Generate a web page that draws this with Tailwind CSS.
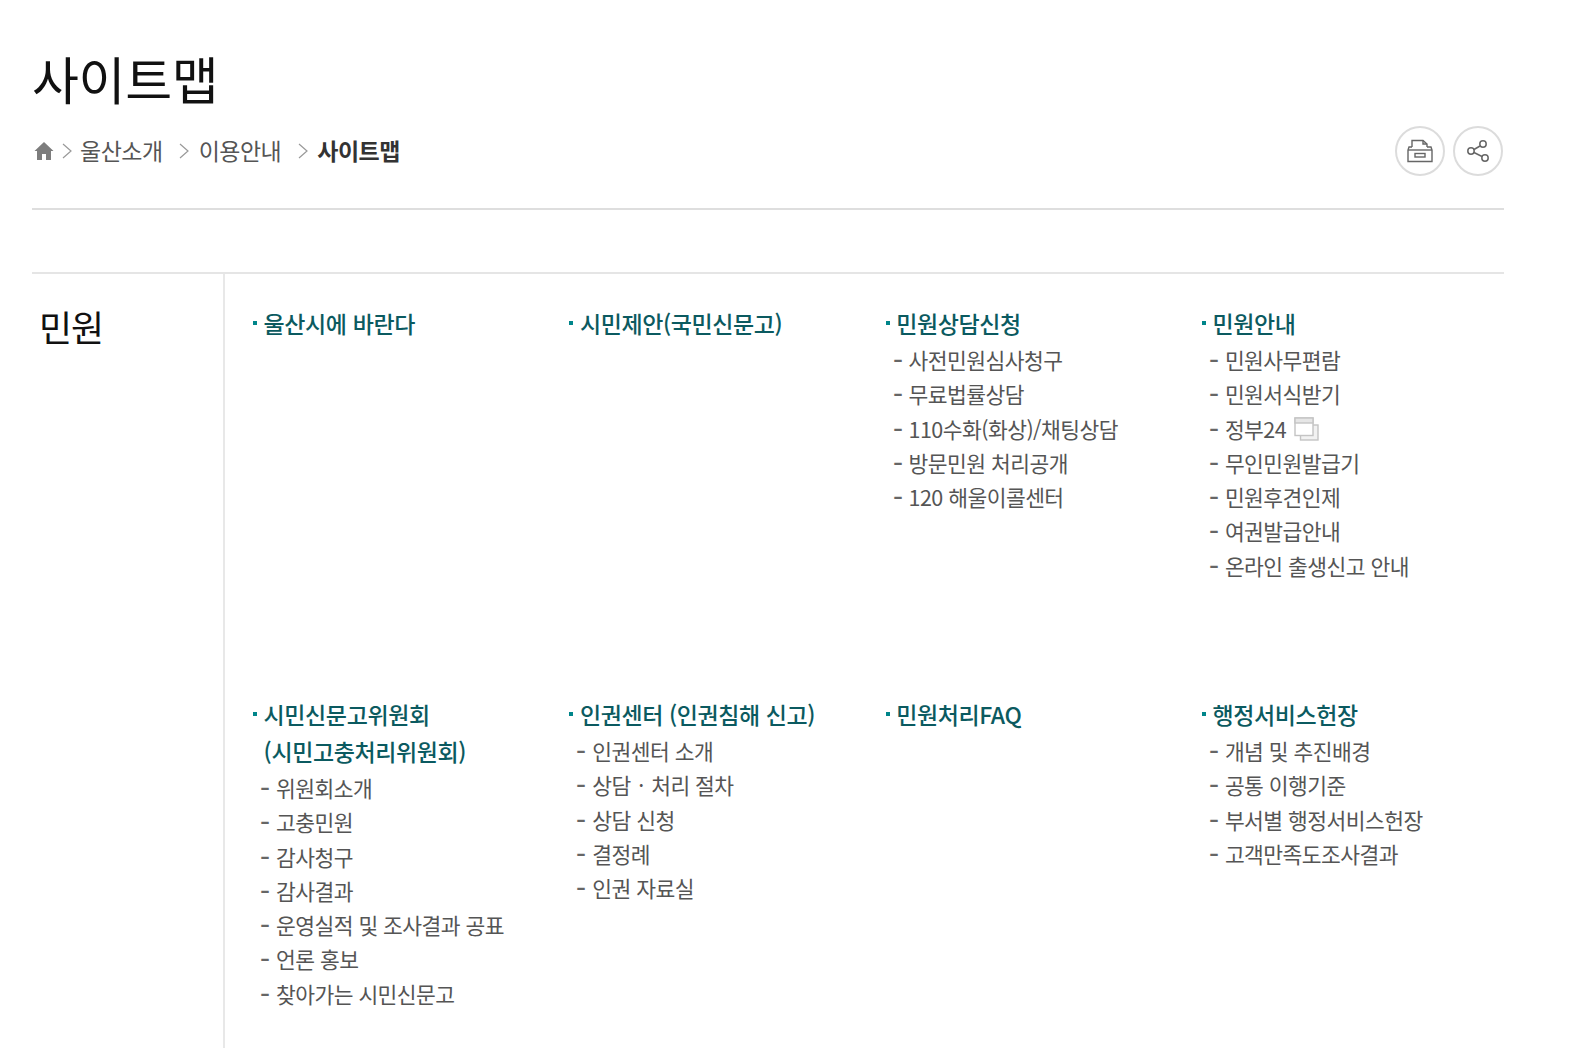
<!DOCTYPE html>
<html lang="ko">
<head>
    <meta charset="UTF-8">
    <title>사이트맵</title>
    <script src="https://cdn.jsdelivr.net/npm/@tailwindcss/browser@4"></script>
</head>
<body class="bg-white font-['Noto_Sans_CJK_KR',sans-serif] overflow-hidden">
    <div class="w-[1569px] h-[1048px] pl-[32px] pr-[65px] overflow-hidden">
        <!-- 제목 -->
        <h1 class="pt-[44px] h-[120px] text-[51px] leading-[68px] font-normal tracking-[-0.3px] text-[#111]">사이트맵</h1>

        <!-- 경로 -->
        <div class="flex items-center justify-between h-[90px] pb-[27px] border-b-2 border-[#dedede]">
            <div class="flex items-center pl-[2px] text-[23px] tracking-[-0.5px] text-[#555]">
                <svg class="w-[20px] h-[20px]" viewBox="0 0 20 20" fill="#7d7d7d"><path d="M10 1 L19.5 10 L17 10 L17 19 L12 19 L12 13 L8 13 L8 19 L3 19 L3 10 L0.5 10 Z"/></svg>
                <svg class="w-[10px] h-[16px] ml-[8px] mr-[8px]" viewBox="0 0 10 16" fill="none" stroke="#999" stroke-width="1.2"><path d="M1 1 L9 8 L1 15"/></svg>
                <span>울산소개</span>
                <svg class="w-[10px] h-[16px] ml-[16px] mr-[10px]" viewBox="0 0 10 16" fill="none" stroke="#999" stroke-width="1.2"><path d="M1 1 L9 8 L1 15"/></svg>
                <span>이용안내</span>
                <svg class="w-[10px] h-[16px] ml-[17px] mr-[9px]" viewBox="0 0 10 16" fill="none" stroke="#999" stroke-width="1.2"><path d="M1 1 L9 8 L1 15"/></svg>
                <span class="font-semibold text-[#333]">사이트맵</span>
            </div>
            <div class="flex gap-[8px] mr-[1px]">
                <button class="w-[50px] h-[50px] rounded-full border-2 border-[#dcdcdc] flex items-center justify-center">
                    <svg class="w-[26px] h-[24px]" viewBox="0 0 26 24" fill="none" stroke="#666" stroke-width="1.4"><path d="M5 8 V1.5 H16 L20 5 V8"/><path d="M16 1.5 V5 H20"/><path d="M5 8 H2 L1 11 V22.5 H25 V11 L24 8 H20"/><path d="M1 11 H25"/><rect x="8" y="14.5" width="10" height="3.5"/></svg>
                </button>
                <button class="w-[50px] h-[50px] rounded-full border-2 border-[#dcdcdc] flex items-center justify-center">
                    <svg class="w-[24px] h-[24px]" viewBox="0 0 24 24" fill="none" stroke="#666" stroke-width="1.5"><circle cx="17" cy="5" r="3.2"/><circle cx="5" cy="12" r="3.2"/><circle cx="19" cy="19" r="3.2"/><path d="M8 10.5 L14 7"/><path d="M8 13.5 L16 17.5"/></svg>
                </button>
            </div>
        </div>

        <!-- 민원 -->
        <div class="flex mt-[62px] border-t-2 border-[#e5e5e5]">
            <h2 class="w-[193px] shrink-0 pl-[7px] pt-[27px] text-[36px] leading-[50px] font-normal tracking-[-1.2px] text-[#111] border-r-2 border-[#e8e8e8] h-[780px]">민원</h2>
            <div class="grid grid-cols-[316.3px_316.3px_316.3px_316.3px] grid-rows-[391px_auto] pl-[27px] pt-[31px]">
                <div>
                    <a class="flex text-[23px] leading-[37px] font-medium tracking-[-0.4px] text-[#0b5a60]"><span class="w-[4px] h-[4px] mt-[16px] ml-[1px] mr-[6.6px] shrink-0 bg-[#00858a]"></span>울산시에 바란다</a>
                </div>
                <div>
                    <a class="flex text-[23px] leading-[37px] font-medium tracking-[-0.4px] text-[#0b5a60]"><span class="w-[4px] h-[4px] mt-[16px] ml-[1px] mr-[6.6px] shrink-0 bg-[#00858a]"></span>시민제안(국민신문고)</a>
                </div>
                <div>
                    <a class="flex text-[23px] leading-[37px] font-medium tracking-[-0.4px] text-[#0b5a60]"><span class="w-[4px] h-[4px] mt-[16px] ml-[1px] mr-[6.6px] shrink-0 bg-[#00858a]"></span>민원상담신청</a>
                    <ul class="pl-[8px] pt-[1px] text-[21.5px] leading-[34.3px] tracking-[-0.55px] text-[#555]">
                        <li class="flex"><span class="w-[16px] shrink-0 font-bold scale-x-125 origin-left text-[#666]">-</span>사전민원심사청구</li>
                        <li class="flex"><span class="w-[16px] shrink-0 font-bold scale-x-125 origin-left text-[#666]">-</span>무료법률상담</li>
                        <li class="flex"><span class="w-[16px] shrink-0 font-bold scale-x-125 origin-left text-[#666]">-</span>110수화(화상)/채팅상담</li>
                        <li class="flex"><span class="w-[16px] shrink-0 font-bold scale-x-125 origin-left text-[#666]">-</span>방문민원 처리공개</li>
                        <li class="flex"><span class="w-[16px] shrink-0 font-bold scale-x-125 origin-left text-[#666]">-</span>120 해울이콜센터</li>
                    </ul>
                </div>
                <div>
                    <a class="flex text-[23px] leading-[37px] font-medium tracking-[-0.4px] text-[#0b5a60]"><span class="w-[4px] h-[4px] mt-[16px] ml-[1px] mr-[6.6px] shrink-0 bg-[#00858a]"></span>민원안내</a>
                    <ul class="pl-[8px] pt-[1px] text-[21.5px] leading-[34.3px] tracking-[-0.55px] text-[#555]">
                        <li class="flex"><span class="w-[16px] shrink-0 font-bold scale-x-125 origin-left text-[#666]">-</span>민원사무편람</li>
                        <li class="flex"><span class="w-[16px] shrink-0 font-bold scale-x-125 origin-left text-[#666]">-</span>민원서식받기</li>
                        <li class="flex items-center"><span class="w-[16px] shrink-0 font-bold scale-x-125 origin-left text-[#666]">-</span>정부24
                            <svg class="w-[25px] h-[24px] ml-[8px]" viewBox="0 0 25 24" stroke="#c4c4c4" stroke-width="1.4"><rect x="6.5" y="8" width="17.5" height="15" fill="#f2f2f2"/><rect x="1" y="1" width="18" height="17.5" fill="#fff"/><rect x="1" y="1" width="18" height="5" fill="#e6e6e6"/></svg>
                        </li>
                        <li class="flex"><span class="w-[16px] shrink-0 font-bold scale-x-125 origin-left text-[#666]">-</span>무인민원발급기</li>
                        <li class="flex"><span class="w-[16px] shrink-0 font-bold scale-x-125 origin-left text-[#666]">-</span>민원후견인제</li>
                        <li class="flex"><span class="w-[16px] shrink-0 font-bold scale-x-125 origin-left text-[#666]">-</span>여권발급안내</li>
                        <li class="flex"><span class="w-[16px] shrink-0 font-bold scale-x-125 origin-left text-[#666]">-</span>온라인 출생신고 안내</li>
                    </ul>
                </div>
                <div>
                    <a class="flex text-[23px] leading-[37px] font-medium tracking-[-0.4px] text-[#0b5a60]"><span class="w-[4px] h-[4px] mt-[16px] ml-[1px] mr-[6.6px] shrink-0 bg-[#00858a]"></span><span>시민신문고위원회<br>(시민고충처리위원회)</span></a>
                    <ul class="pl-[8px] pt-[1px] text-[21.5px] leading-[34.3px] tracking-[-0.55px] text-[#555]">
                        <li class="flex"><span class="w-[16px] shrink-0 font-bold scale-x-125 origin-left text-[#666]">-</span>위원회소개</li>
                        <li class="flex"><span class="w-[16px] shrink-0 font-bold scale-x-125 origin-left text-[#666]">-</span>고충민원</li>
                        <li class="flex"><span class="w-[16px] shrink-0 font-bold scale-x-125 origin-left text-[#666]">-</span>감사청구</li>
                        <li class="flex"><span class="w-[16px] shrink-0 font-bold scale-x-125 origin-left text-[#666]">-</span>감사결과</li>
                        <li class="flex"><span class="w-[16px] shrink-0 font-bold scale-x-125 origin-left text-[#666]">-</span>운영실적 및 조사결과 공표</li>
                        <li class="flex"><span class="w-[16px] shrink-0 font-bold scale-x-125 origin-left text-[#666]">-</span>언론 홍보</li>
                        <li class="flex"><span class="w-[16px] shrink-0 font-bold scale-x-125 origin-left text-[#666]">-</span>찾아가는 시민신문고</li>
                    </ul>
                </div>
                <div>
                    <a class="flex text-[23px] leading-[37px] font-medium tracking-[-0.4px] text-[#0b5a60]"><span class="w-[4px] h-[4px] mt-[16px] ml-[1px] mr-[6.6px] shrink-0 bg-[#00858a]"></span>인권센터 (인권침해 신고)</a>
                    <ul class="pl-[8px] pt-[1px] text-[21.5px] leading-[34.3px] tracking-[-0.55px] text-[#555]">
                        <li class="flex"><span class="w-[16px] shrink-0 font-bold scale-x-125 origin-left text-[#666]">-</span>인권센터 소개</li>
                        <li class="flex"><span class="w-[16px] shrink-0 font-bold scale-x-125 origin-left text-[#666]">-</span><span>상담 <span class="mx-[2px]">·</span> 처리 절차</span></li>
                        <li class="flex"><span class="w-[16px] shrink-0 font-bold scale-x-125 origin-left text-[#666]">-</span>상담 신청</li>
                        <li class="flex"><span class="w-[16px] shrink-0 font-bold scale-x-125 origin-left text-[#666]">-</span>결정례</li>
                        <li class="flex"><span class="w-[16px] shrink-0 font-bold scale-x-125 origin-left text-[#666]">-</span>인권 자료실</li>
                    </ul>
                </div>
                <div>
                    <a class="flex text-[23px] leading-[37px] font-medium tracking-[-0.4px] text-[#0b5a60]"><span class="w-[4px] h-[4px] mt-[16px] ml-[1px] mr-[6.6px] shrink-0 bg-[#00858a]"></span>민원처리FAQ</a>
                </div>
                <div>
                    <a class="flex text-[23px] leading-[37px] font-medium tracking-[-0.4px] text-[#0b5a60]"><span class="w-[4px] h-[4px] mt-[16px] ml-[1px] mr-[6.6px] shrink-0 bg-[#00858a]"></span>행정서비스헌장</a>
                    <ul class="pl-[8px] pt-[1px] text-[21.5px] leading-[34.3px] tracking-[-0.55px] text-[#555]">
                        <li class="flex"><span class="w-[16px] shrink-0 font-bold scale-x-125 origin-left text-[#666]">-</span>개념 및 추진배경</li>
                        <li class="flex"><span class="w-[16px] shrink-0 font-bold scale-x-125 origin-left text-[#666]">-</span>공통 이행기준</li>
                        <li class="flex"><span class="w-[16px] shrink-0 font-bold scale-x-125 origin-left text-[#666]">-</span>부서별 행정서비스헌장</li>
                        <li class="flex"><span class="w-[16px] shrink-0 font-bold scale-x-125 origin-left text-[#666]">-</span>고객만족도조사결과</li>
                    </ul>
                </div>
            </div>
        </div>
    </div>
</body>
</html>
